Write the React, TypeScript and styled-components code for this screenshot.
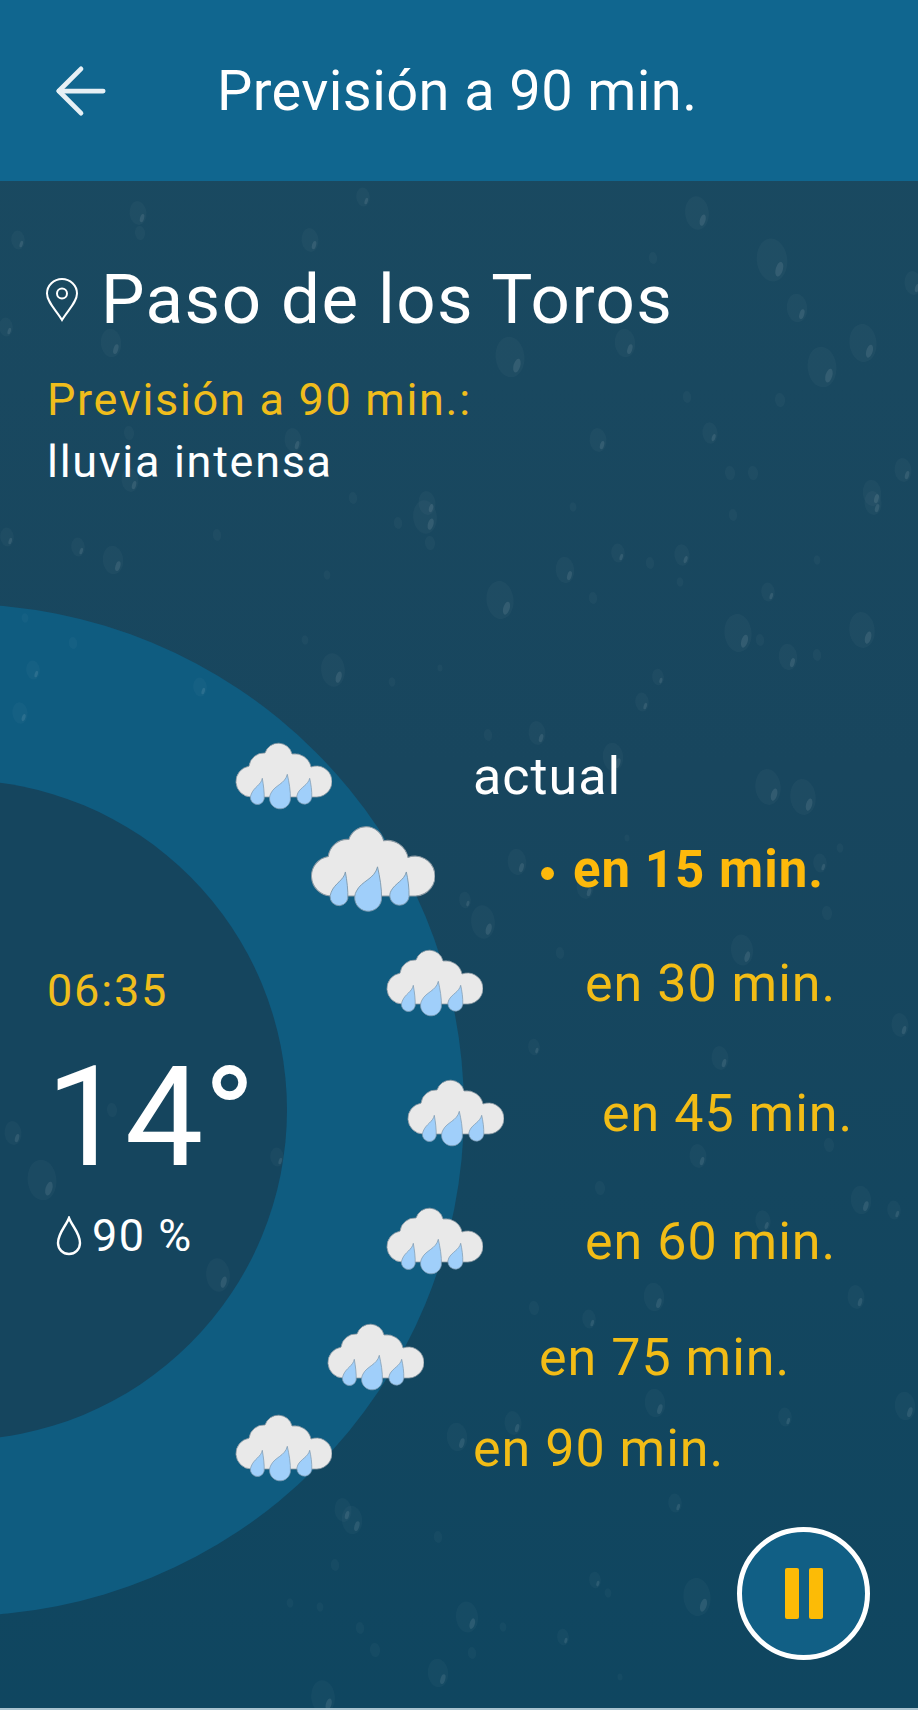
import styled, { createGlobalStyle } from 'styled-components';
import { ArrowLeft } from 'lucide-react';

const GlobalStyle = createGlobalStyle`
  html, body {
    margin: 0;
    padding: 0;
    background: #19475f;
  }
`;

const Screen = styled.div`
  width: 918px;
  height: 1710px;
  position: relative;
  overflow: hidden;
  background: linear-gradient(#1a4a61, #18465e 45%, #0f4660);
  font-family: Roboto, "Liberation Sans", sans-serif;
  color: #fff;
`;

const Header = styled.header`
  height: 181px;
  background: #10668f;
  display: flex;
  align-items: center;
  padding-left: 43px;
  box-sizing: border-box;
  position: relative;
`;

const BackIcon = styled(ArrowLeft)`
  width: 76px;
  height: 76px;
  color: #e6f0f5;
  flex: none;
`;

const HeaderTitle = styled.h1`
  margin: 0 0 0 98px;
  font-size: 56px;
  font-weight: 400;
  letter-spacing: 0.4px;
`;

const Rain = styled.svg`
  position: absolute;
  left: 0;
  top: 181px;
`;

const OuterRing = styled.div`
  position: absolute;
  left: -548px;
  top: 604px;
  width: 1012px;
  height: 1012px;
  border-radius: 50%;
  background: #0f5c80;
`;

const InnerRing = styled.div`
  position: absolute;
  left: -373px;
  top: 780px;
  width: 660px;
  height: 660px;
  border-radius: 50%;
  background: #15455e;
`;

const Content = styled.main`
  position: relative;
  height: 1529px;
`;

const Summary = styled.section`
  padding: 79px 0 0 45px;
  height: 424px;
  box-sizing: border-box;
`;

const Place = styled.div`
  display: flex;
  align-items: center;
  gap: 22px;
  font-size: 69px;
  line-height: 80px;
  letter-spacing: 1.45px;
`;

const Label = styled.div`
  margin: 36px 0 0 2px;
  font-size: 45px;
  line-height: 48px;
  letter-spacing: 1.7px;
  color: #f0bd1c;
`;

const Condition = styled.div`
  margin: 14px 0 0 2px;
  font-size: 45px;
  line-height: 48px;
  letter-spacing: 1.7px;
`;

const Now = styled.section`
  position: absolute;
  left: 47px;
  top: 786px;
`;

const Clock = styled.div`
  font-size: 45px;
  line-height: 48px;
  letter-spacing: 1.8px;
  color: #f0bd1c;
`;

const Temp = styled.div`
  margin: 22px 0 0 -1px;
  font-size: 140px;
  line-height: 160px;
  font-weight: 400;
`;

const Humidity = styled.div`
  display: flex;
  align-items: center;
  gap: 10px;
  margin: 15px 0 0 9px;
  font-size: 45px;
  line-height: 48px;
  letter-spacing: 1.5px;
`;

const Forecast = styled.section`
  display: flex;
  flex-direction: column;
`;

const Row = styled.div<{ $cloud: number; $label: number; $top: number }>`
  display: grid;
  grid-template-columns: ${(p) => p.$cloud}px ${(p) => p.$label - p.$cloud}px 1fr;
  align-items: center;
  height: 72px;
  margin-top: ${(p) => p.$top}px;
`;

const Slot = styled.div`
  grid-column: 2;
  display: flex;
  align-items: center;
`;

const When = styled.div<{ $active?: boolean; $now?: boolean }>`
  grid-column: 3;
  font-size: ${(p) => (p.$active ? 51 : 52)}px;
  font-weight: ${(p) => (p.$active ? 700 : 400)};
  letter-spacing: 1px;
  color: ${(p) => (p.$now ? '#fff' : p.$active ? '#fdb90b' : '#f2bc16')};
  white-space: nowrap;
`;

const Bullet = styled.span`
  display: inline-block;
  margin-right: 19px;
  vertical-align: middle;
  width: 13px;
  height: 13px;
  border-radius: 50%;
  background: #fdb90b;
`;

const PauseButton = styled.button`
  position: absolute;
  left: 737px;
  top: 1527px;
  width: 133px;
  height: 133px;
  box-sizing: border-box;
  border: 5px solid #fff;
  border-radius: 50%;
  background: #115f85;
  display: flex;
  align-items: center;
  justify-content: center;
  gap: 10px;
  padding: 0;
`;

const PauseBar = styled.span`
  width: 14px;
  height: 51px;
  border-radius: 2px;
  background: #fcbb06;
`;

const BottomEdge = styled.div`
  position: absolute;
  left: 0;
  right: 0;
  bottom: 0;
  height: 2px;
  background: #a9c3cf;
`;

function PinIcon() {
  return (
    <svg width="34" height="44" viewBox="0 0 34 44" fill="none" stroke="#fff" strokeWidth="2">
      <path d="M17 42C11 32 2 24 2 15.5A15 14.5 0 0 1 32 15.5C32 24 23 32 17 42Z" />
      <circle cx="17" cy="15.5" r="5" />
    </svg>
  );
}

function DropIcon() {
  return (
    <svg width="26" height="40" viewBox="0 0 26 40" fill="none" stroke="#fff" strokeWidth="2.4">
      <path d="M13 2C10 10 2 17 2 27A11 11 0 0 0 24 27C24 17 16 10 13 2Z" />
    </svg>
  );
}

function RainCloud({ width }: { width: number }) {
  return (
    <svg width={width} height={(width * 70) / 98} viewBox="0 0 98 70">
      <path
        d="M17 56A15.5 15.5 0 0 1 15 25.2A15 15 0 0 1 31 12A14 14 0 0 1 58 13A16.5 16.5 0 0 1 77 26A15.5 15.5 0 1 1 83 56Z"
        fill="#e9e9e9"
        stroke="#8b99a3"
        strokeWidth="0.8"
      />
      <path
        d="M28.3 37.3C27 44 20 46 17.3 53A7 7 0 1 0 30.2 58C30.5 52 29.5 44 28.3 37.3Z"
        fill="#a0cffa"
        stroke="#7d98ad"
        strokeWidth="0.7"
      />
      <path
        d="M53.3 33.3C51 43 41 44 37 52A10.5 10.5 0 1 0 56.4 59C56.8 50 55 41 53.3 33.3Z"
        fill="#a0cffa"
        stroke="#7d98ad"
        strokeWidth="0.7"
      />
      <path
        d="M75.7 37.3C74 44 67 46 63.8 52A7.5 7.5 0 1 0 77.8 56.5C78 50 77 43 75.7 37.3Z"
        fill="#a0cffa"
        stroke="#7d98ad"
        strokeWidth="0.7"
      />
    </svg>
  );
}

// faint drops on the glass: x, y, radius read off the reference
const drops = [
  [697, 213, 14], [772, 260, 18], [797, 308, 12], [822, 367, 17], [863, 343, 16], [510, 357, 17],
  [625, 343, 12], [598, 440, 10], [710, 433, 9], [903, 470, 10], [872, 493, 11], [687, 397, 5],
  [780, 400, 6], [653, 258, 5], [753, 473, 6], [730, 473, 6], [913, 283, 10], [425, 517, 14],
  [430, 543, 6], [500, 600, 16], [565, 570, 11], [618, 553, 8], [650, 563, 5], [682, 555, 9],
  [680, 582, 4], [593, 598, 5], [768, 592, 8], [738, 633, 16], [760, 640, 5], [788, 657, 11],
  [817, 655, 5], [862, 630, 15], [817, 560, 4], [658, 677, 7], [642, 702, 8], [537, 733, 10],
  [488, 735, 5], [613, 757, 12], [733, 515, 5], [873, 503, 10], [573, 507, 4], [7, 537, 8],
  [78, 547, 8], [113, 560, 12], [217, 535, 5], [353, 498, 5], [398, 523, 5], [327, 575, 4],
  [333, 670, 14], [305, 640, 4], [392, 682, 4], [440, 668, 3], [33, 670, 8], [20, 713, 9],
  [200, 687, 8], [73, 643, 5], [25, 618, 4], [130, 480, 10], [457, 1437, 12], [513, 1423, 10],
  [655, 1403, 12], [675, 1503, 8], [352, 1520, 12], [438, 1537, 5], [335, 1565, 5], [467, 1617, 13],
  [595, 1580, 7], [608, 1593, 4], [697, 1597, 16], [375, 1650, 6], [360, 1628, 5], [438, 1673, 12],
  [323, 1697, 14], [563, 1637, 7], [290, 1603, 4], [320, 1607, 4], [503, 1627, 4], [472, 1653, 5],
  [620, 1677, 3], [768, 787, 15], [803, 797, 15], [517, 862, 11], [585, 887, 10], [483, 922, 14],
  [465, 900, 7], [742, 950, 13], [827, 913, 6], [820, 863, 8], [840, 848, 4], [560, 953, 5],
  [627, 838, 3], [13, 1133, 10], [42, 1180, 17], [112, 1110, 6], [277, 1157, 8], [218, 1275, 14],
  [900, 1025, 10], [861, 1200, 12], [894, 1210, 8], [763, 1221, 9], [654, 1297, 12], [589, 1319, 8],
  [856, 1297, 10], [905, 1406, 12], [343, 1510, 10], [600, 1188, 6], [698, 1156, 10], [534, 1308, 6],
  [785, 1417, 8], [534, 1047, 7], [829, 1145, 6], [720, 1058, 10], [138, 213, 10], [363, 197, 8],
  [111, 343, 12], [310, 240, 10], [18, 240, 8], [140, 233, 6], [6, 327, 8], [129, 433, 6],
  [293, 440, 10], [427, 503, 10],
];

const rows = [
  { cloud: 234, label: 473, top: 135, width: 98, text: 'actual', now: true },
  { cloud: 309, label: 541, top: 12, width: 126, text: 'en 15 min.', active: true },
  { cloud: 385, label: 585, top: 51, width: 98, text: 'en 30 min.' },
  { cloud: 406, label: 602, top: 58, width: 98, text: 'en 45 min.' },
  { cloud: 385, label: 585, top: 56, width: 98, text: 'en 60 min.' },
  { cloud: 326, label: 539, top: 44, width: 98, text: 'en 75 min.' },
  { cloud: 234, label: 473, top: 19, width: 98, text: 'en 90 min.' },
];

export default function App() {
  return (
    <>
      <GlobalStyle />
      <Screen>
        <OuterRing />
        <InnerRing />
        <Rain width="918" height="1529" viewBox="0 181 918 1529">
          {drops.map(([x, y, r], i) => (
            <g key={i} transform={`translate(${x} ${y}) rotate(-6)`}>
              <ellipse rx={r * 0.85} ry={r * 1.2} fill="#fff" opacity="0.028" />
              {r > 6 && (
                <ellipse
                  cx={r * 0.35}
                  cy={r * 0.55}
                  rx={Math.max(r * 0.2, 1.5)}
                  ry={r * 0.42}
                  transform={`rotate(22 ${r * 0.35} ${r * 0.55})`}
                  fill="#fff"
                  opacity="0.09"
                />
              )}
            </g>
          ))}
        </Rain>
        <Header>
          <BackIcon strokeWidth={1.5} />
          <HeaderTitle>Previsión a 90 min.</HeaderTitle>
        </Header>
        <Content>
          <Summary>
            <Place>
              <PinIcon />
              Paso de los Toros
            </Place>
            <Label>Previsión a 90 min.:</Label>
            <Condition>lluvia intensa</Condition>
          </Summary>
          <Forecast>
            {rows.map((r) => (
              <Row key={r.text} $cloud={r.cloud} $label={r.label} $top={r.top}>
                <Slot>
                  <RainCloud width={r.width} />
                </Slot>
                <When $active={r.active} $now={r.now}>
                  {r.active && <Bullet />}
                  {r.text}
                </When>
              </Row>
            ))}
          </Forecast>
          <Now>
            <Clock>06:35</Clock>
            <Temp>14°</Temp>
            <Humidity>
              <DropIcon />
              90 %
            </Humidity>
          </Now>
        </Content>
        <PauseButton aria-label="Pausa">
          <PauseBar />
          <PauseBar />
        </PauseButton>
        <BottomEdge />
      </Screen>
    </>
  );
}
